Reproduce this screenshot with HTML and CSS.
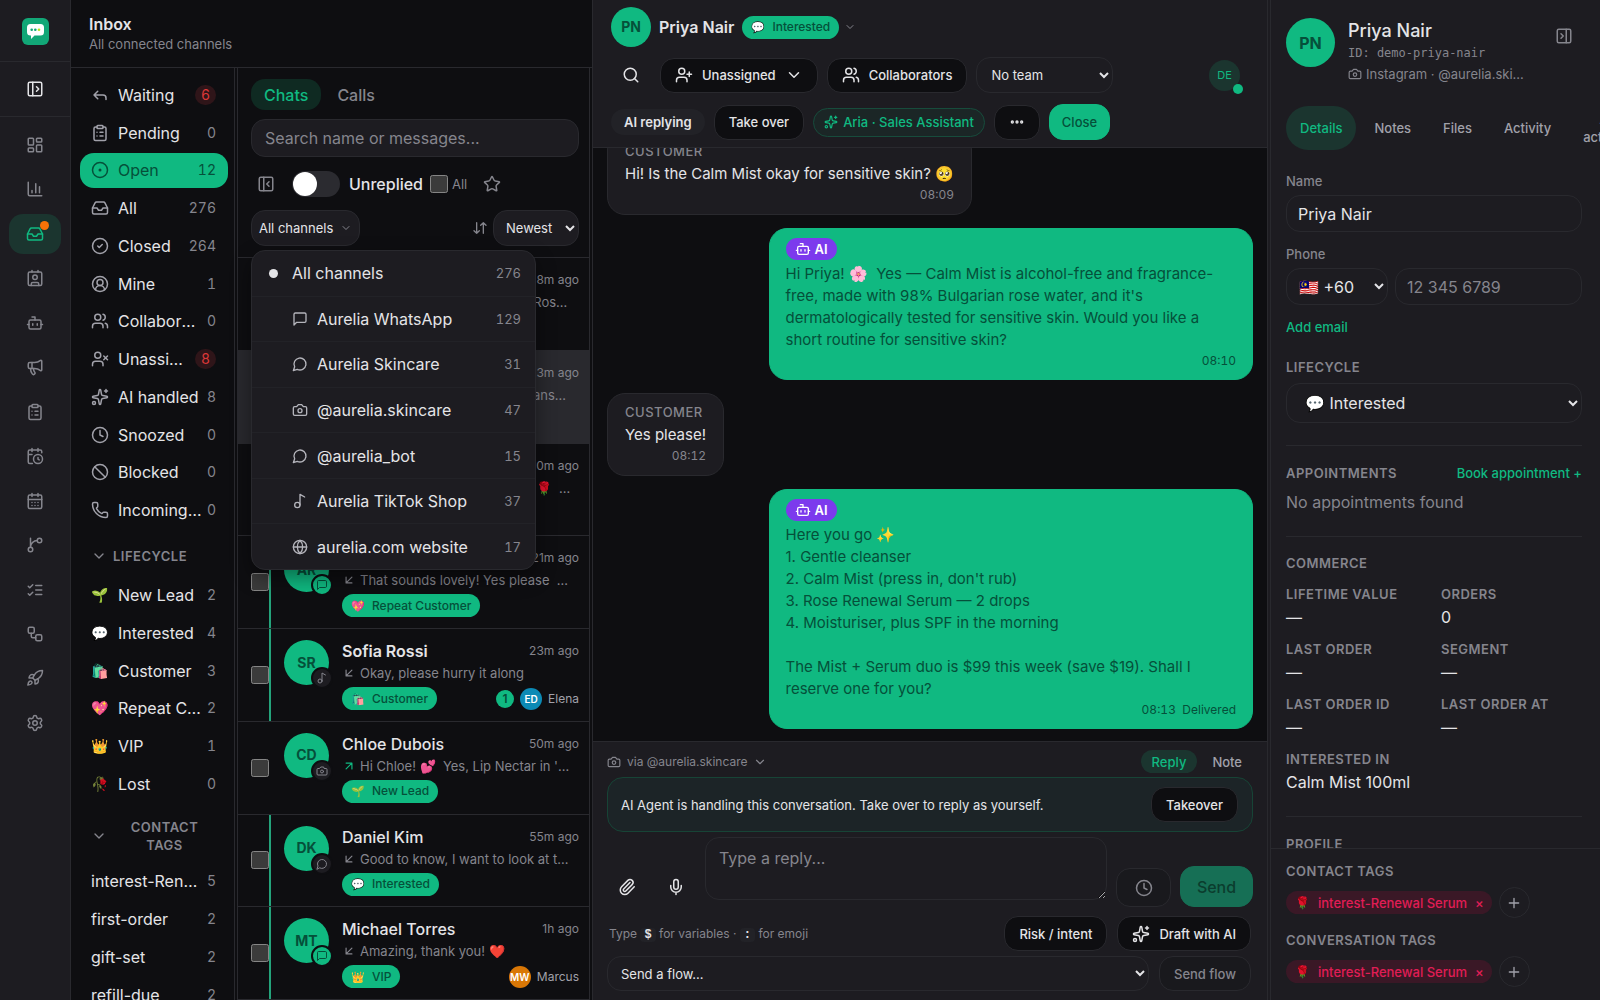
FILE: index.html
```html
<!DOCTYPE html>
<html lang="en">
<head>
    <meta charset="UTF-8">
    <meta name="viewport" content="width=device-width, initial-scale=1.0">
    <title>Inbox</title>
    <link rel="stylesheet" href="styles.css">
</head>
<body>
    <svg class="sprite" aria-hidden="true">
        <symbol id="panel-open" viewBox="0 0 24 24"><rect width="18" height="18" x="3" y="3" rx="2"/><path d="M9 3v18M14 9l3 3-3 3"/></symbol>
        <symbol id="panel-close" viewBox="0 0 24 24"><rect width="18" height="18" x="3" y="3" rx="2"/><path d="M9 3v18M16 15l-3-3 3-3"/></symbol>
        <symbol id="panel-right" viewBox="0 0 24 24"><rect width="18" height="18" x="3" y="3" rx="2"/><path d="M15 3v18M8 9l3 3-3 3"/></symbol>
        <symbol id="dashboard" viewBox="0 0 24 24"><rect width="7" height="9" x="3" y="3" rx="1"/><rect width="7" height="5" x="14" y="3" rx="1"/><rect width="7" height="9" x="14" y="12" rx="1"/><rect width="7" height="5" x="3" y="16" rx="1"/></symbol>
        <symbol id="chart" viewBox="0 0 24 24"><path d="M3 3v16a2 2 0 0 0 2 2h16M18 17V9M13 17V5M8 17v-3"/></symbol>
        <symbol id="inbox" viewBox="0 0 24 24"><path d="M22 12h-6l-2 3h-4l-2-3H2"/><path d="M5.45 5.11 2 12v6a2 2 0 0 0 2 2h16a2 2 0 0 0 2-2v-6l-3.45-6.89A2 2 0 0 0 16.76 4H7.24a2 2 0 0 0-1.79 1.11z"/></symbol>
        <symbol id="contact" viewBox="0 0 24 24"><path d="M16 2v2M8 2v2M7 22v-2a2 2 0 0 1 2-2h6a2 2 0 0 1 2 2v2"/><circle cx="12" cy="11" r="3"/><rect x="3" y="4" width="18" height="18" rx="2"/></symbol>
        <symbol id="bot" viewBox="0 0 24 24"><path d="M12 8V4H8M2 14h2M20 14h2M15 13v2M9 13v2"/><rect width="16" height="12" x="4" y="8" rx="2"/></symbol>
        <symbol id="megaphone" viewBox="0 0 24 24"><path d="M11 6a13 13 0 0 0 8.4-2.8A1 1 0 0 1 21 4v12a1 1 0 0 1-1.6.8A13 13 0 0 0 11 14H5a2 2 0 0 1-2-2V8a2 2 0 0 1 2-2z"/><path d="M6 14a12 12 0 0 0 2.4 7.2 2 2 0 0 0 3.2-2.4A8 8 0 0 1 10 14M8 6v8"/></symbol>
        <symbol id="clipboard" viewBox="0 0 24 24"><rect width="8" height="4" x="8" y="2" rx="1"/><path d="M16 4h2a2 2 0 0 1 2 2v14a2 2 0 0 1-2 2H6a2 2 0 0 1-2-2V6a2 2 0 0 1 2-2h2M12 11h4M12 16h4M8 11h.01M8 16h.01"/></symbol>
        <symbol id="calendar-clock" viewBox="0 0 24 24"><path d="M16 14v2.2l1.6 1M16 2v4M21 7.5V6a2 2 0 0 0-2-2H5a2 2 0 0 0-2 2v14a2 2 0 0 0 2 2h3.5M3 10h5M8 2v4"/><circle cx="16" cy="16" r="6"/></symbol>
        <symbol id="calendar" viewBox="0 0 24 24"><path d="M8 2v4M16 2v4M3 10h18M8 14h.01M12 14h.01M16 14h.01M8 18h.01M12 18h.01M16 18h.01"/><rect width="18" height="18" x="3" y="4" rx="2"/></symbol>
        <symbol id="branch" viewBox="0 0 24 24"><path d="M15 6a9 9 0 0 0-9 9V3"/><circle cx="18" cy="6" r="3"/><circle cx="6" cy="18" r="3"/></symbol>
        <symbol id="checks" viewBox="0 0 24 24"><path d="m3 17 2 2 4-4M3 7l2 2 4-4M13 6h8M13 12h8M13 18h8"/></symbol>
        <symbol id="workflow" viewBox="0 0 24 24"><rect width="8" height="8" x="3" y="3" rx="2"/><path d="M7 11v4a2 2 0 0 0 2 2h4"/><rect width="8" height="8" x="13" y="13" rx="2"/></symbol>
        <symbol id="rocket" viewBox="0 0 24 24"><path d="M4.5 16.5c-1.5 1.26-2 5-2 5s3.74-.5 5-2c.71-.84.7-2.13-.09-2.91a2.18 2.18 0 0 0-2.91-.09zM12 15l-3-3a22 22 0 0 1 2-3.95A12.88 12.88 0 0 1 22 2c0 2.72-.78 7.5-6 11a22.35 22.35 0 0 1-4 2z"/><path d="M9 12H4s.55-3.03 2-4c1.62-1.08 5 0 5 0M12 15v5s3.03-.55 4-2c1.08-1.62 0-5 0-5"/></symbol>
        <symbol id="settings" viewBox="0 0 24 24"><path d="M9.671 4.136a2.34 2.34 0 0 1 4.659 0 2.34 2.34 0 0 0 3.319 1.915 2.34 2.34 0 0 1 2.33 4.033 2.34 2.34 0 0 0 0 3.831 2.34 2.34 0 0 1-2.33 4.033 2.34 2.34 0 0 0-3.319 1.915 2.34 2.34 0 0 1-4.659 0 2.34 2.34 0 0 0-3.32-1.915 2.34 2.34 0 0 1-2.33-4.033 2.34 2.34 0 0 0 0-3.831A2.34 2.34 0 0 1 6.35 6.051a2.34 2.34 0 0 0 3.319-1.915"/><circle cx="12" cy="12" r="3"/></symbol>
        <symbol id="reply" viewBox="0 0 24 24"><path d="M20 18v-2a4 4 0 0 0-4-4H4M9 17l-5-5 5-5"/></symbol>
        <symbol id="circle-dot" viewBox="0 0 24 24"><circle cx="12" cy="12" r="10"/><circle cx="12" cy="12" r="1"/></symbol>
        <symbol id="circle-check" viewBox="0 0 24 24"><circle cx="12" cy="12" r="10"/><path d="m9 12 2 2 4-4"/></symbol>
        <symbol id="circle-user" viewBox="0 0 24 24"><circle cx="12" cy="12" r="10"/><circle cx="12" cy="10" r="4"/><path d="M18 20a6 6 0 0 0-12 0"/></symbol>
        <symbol id="users" viewBox="0 0 24 24"><path d="M16 21v-2a4 4 0 0 0-4-4H6a4 4 0 0 0-4 4v2M16 3.128a4 4 0 0 1 0 7.744M22 21v-2a4 4 0 0 0-3-3.87"/><circle cx="9" cy="7" r="4"/></symbol>
        <symbol id="user-x" viewBox="0 0 24 24"><path d="M16 21v-2a4 4 0 0 0-4-4H6a4 4 0 0 0-4 4v2M17 8l5 5M22 8l-5 5"/><circle cx="9" cy="7" r="4"/></symbol>
        <symbol id="user-plus" viewBox="0 0 24 24"><path d="M16 21v-2a4 4 0 0 0-4-4H6a4 4 0 0 0-4 4v2M19 8v6M22 11h-6"/><circle cx="9" cy="7" r="4"/></symbol>
        <symbol id="sparkles" viewBox="0 0 24 24"><path d="M11.017 2.814a1 1 0 0 1 1.966 0l1.051 5.558a2 2 0 0 0 1.594 1.594l5.558 1.051a1 1 0 0 1 0 1.966l-5.558 1.051a2 2 0 0 0-1.594 1.594l-1.051 5.558a1 1 0 0 1-1.966 0l-1.051-5.558a2 2 0 0 0-1.594-1.594l-5.558-1.051a1 1 0 0 1 0-1.966l5.558-1.051a2 2 0 0 0 1.594-1.594zM20 2v4M22 4h-4"/><circle cx="4" cy="20" r="2"/></symbol>
        <symbol id="clock" viewBox="0 0 24 24"><circle cx="12" cy="12" r="10"/><path d="M12 6v6l4 2"/></symbol>
        <symbol id="ban" viewBox="0 0 24 24"><circle cx="12" cy="12" r="10"/><path d="m4.9 4.9 14.2 14.2"/></symbol>
        <symbol id="phone" viewBox="0 0 24 24"><path d="M13.832 16.568a1 1 0 0 0 1.213-.303l.355-.465A2 2 0 0 1 17 15h3a2 2 0 0 1 2 2v3a2 2 0 0 1-2 2A18 18 0 0 1 2 4a2 2 0 0 1 2-2h3a2 2 0 0 1 2 2v3a2 2 0 0 1-.8 1.6l-.468.351a1 1 0 0 0-.292 1.233 14 14 0 0 0 6.392 6.384"/></symbol>
        <symbol id="star" viewBox="0 0 24 24"><path d="M11.525 2.295a.53.53 0 0 1 .95 0l2.31 4.679a2.123 2.123 0 0 0 1.595 1.16l5.166.756a.53.53 0 0 1 .294.904l-3.736 3.638a2.123 2.123 0 0 0-.611 1.878l.882 5.14a.53.53 0 0 1-.771.56l-4.618-2.428a2.122 2.122 0 0 0-1.973 0L6.396 21.01a.53.53 0 0 1-.77-.56l.881-5.139a2.122 2.122 0 0 0-.611-1.879L2.16 9.795a.53.53 0 0 1 .294-.906l5.165-.755a2.122 2.122 0 0 0 1.597-1.16z"/></symbol>
        <symbol id="sort" viewBox="0 0 24 24"><path d="m3 16 4 4 4-4M7 20V4M21 8l-4-4-4 4M17 4v16"/></symbol>
        <symbol id="chevron" viewBox="0 0 24 24"><path d="m6 9 6 6 6-6"/></symbol>
        <symbol id="msg-square" viewBox="0 0 24 24"><path d="M21 15a2 2 0 0 1-2 2H7l-4 4V5a2 2 0 0 1 2-2h14a2 2 0 0 1 2 2z"/></symbol>
        <symbol id="msg-circle" viewBox="0 0 24 24"><path d="M7.9 20A9 9 0 1 0 4 16.1L2 22z"/></symbol>
        <symbol id="camera" viewBox="0 0 24 24"><path d="M14.5 4h-5L7 7H4a2 2 0 0 0-2 2v9a2 2 0 0 0 2 2h16a2 2 0 0 0 2-2V9a2 2 0 0 0-2-2h-3z"/><circle cx="12" cy="13" r="3"/></symbol>
        <symbol id="music" viewBox="0 0 24 24"><circle cx="8" cy="18" r="4"/><path d="M12 18V2l7 4"/></symbol>
        <symbol id="globe" viewBox="0 0 24 24"><circle cx="12" cy="12" r="10"/><path d="M12 2a14.5 14.5 0 0 0 0 20 14.5 14.5 0 0 0 0-20M2 12h20"/></symbol>
        <symbol id="arrow-in" viewBox="0 0 24 24"><path d="M17 7 7 17M17 17H7V7"/></symbol>
        <symbol id="arrow-out" viewBox="0 0 24 24"><path d="M7 7h10v10M7 17 17 7"/></symbol>
        <symbol id="search" viewBox="0 0 24 24"><path d="m21 21-4.34-4.34"/><circle cx="11" cy="11" r="8"/></symbol>
        <symbol id="clip" viewBox="0 0 24 24"><path d="m16 6-8.414 8.586a2 2 0 0 0 2.829 2.829l8.414-8.586a4 4 0 1 0-5.657-5.657l-8.379 8.551a6 6 0 1 0 8.485 8.485l8.379-8.551"/></symbol>
        <symbol id="mic" viewBox="0 0 24 24"><path d="M12 19v3M19 10v2a7 7 0 0 1-14 0v-2"/><rect x="9" y="2" width="6" height="13" rx="3"/></symbol>
        <symbol id="dots" viewBox="0 0 24 24"><circle cx="5" cy="12" r="1"/><circle cx="12" cy="12" r="1"/><circle cx="19" cy="12" r="1"/></symbol>
        <symbol id="plus" viewBox="0 0 24 24"><path d="M5 12h14M12 5v14"/></symbol>
    </svg>

    <div class="app">
        <aside class="rail">
            <a class="logo" href="#" aria-label="Home">
                <svg viewBox="0 0 27 27" width="27" height="27">
                    <rect width="27" height="27" rx="6" fill="#12a777"/>
                    <path d="M8.500 6h10a3.500 3.500 0 0 1 3.500 3.500v4.500a3.500 3.500 0 0 1-3.500 3.500H12.500L9 21v-3.500h-.5A3.500 3.500 0 0 1 5 14V9.500A3.500 3.500 0 0 1 8.500 6z" fill="#fff"/>
                    <circle cx="9.700" cy="11.800" r="1.300" fill="#12a777"/>
                    <circle cx="13.300" cy="11.800" r="1.300" fill="#12a777"/>
                    <circle cx="17" cy="11.800" r="1.300" fill="#b5e61d"/>
                </svg>
            </a>
            <button class="rail-toggle" aria-label="Expand sidebar"><svg class="icon"><use href="#panel-open"/></svg></button>
            <nav class="rail-nav">
                <a href="#" aria-label="Dashboard"><svg class="icon"><use href="#dashboard"/></svg></a>
                <a href="#" aria-label="Reports"><svg class="icon"><use href="#chart"/></svg></a>
                <a href="#" aria-label="Inbox" class="active"><svg class="icon"><use href="#inbox"/></svg><span class="alert-dot"></span></a>
                <a href="#" aria-label="Contacts"><svg class="icon"><use href="#contact"/></svg></a>
                <a href="#" aria-label="AI agents"><svg class="icon"><use href="#bot"/></svg></a>
                <a href="#" aria-label="Broadcasts"><svg class="icon"><use href="#megaphone"/></svg></a>
                <a href="#" aria-label="Forms"><svg class="icon"><use href="#clipboard"/></svg></a>
                <a href="#" aria-label="Scheduled"><svg class="icon"><use href="#calendar-clock"/></svg></a>
                <a href="#" aria-label="Calendar"><svg class="icon"><use href="#calendar"/></svg></a>
                <a href="#" aria-label="Flows"><svg class="icon"><use href="#branch"/></svg></a>
                <a href="#" aria-label="Tasks"><svg class="icon"><use href="#checks"/></svg></a>
                <a href="#" aria-label="Integrations"><svg class="icon"><use href="#workflow"/></svg></a>
                <a href="#" aria-label="Launch"><svg class="icon"><use href="#rocket"/></svg></a>
                <a href="#" aria-label="Settings"><svg class="icon"><use href="#settings"/></svg></a>
            </nav>
        </aside>

        <section class="inbox">
            <header class="inbox-header">
                <h1>Inbox</h1>
                <p>All connected channels</p>
            </header>
            <div class="inbox-body">
                <nav class="filters">
                    <ul class="filter-list views">
                        <li><a href="#"><svg class="icon"><use href="#reply"/></svg><span class="label">Waiting</span><span class="count hot">6</span></a></li>
                        <li><a href="#"><svg class="icon"><use href="#clipboard"/></svg><span class="label">Pending</span><span class="count">0</span></a></li>
                        <li><a href="#" class="active"><svg class="icon"><use href="#circle-dot"/></svg><span class="label">Open</span><span class="count">12</span></a></li>
                        <li><a href="#"><svg class="icon"><use href="#inbox"/></svg><span class="label">All</span><span class="count">276</span></a></li>
                        <li><a href="#"><svg class="icon"><use href="#circle-check"/></svg><span class="label">Closed</span><span class="count">264</span></a></li>
                        <li><a href="#"><svg class="icon"><use href="#circle-user"/></svg><span class="label">Mine</span><span class="count">1</span></a></li>
                        <li><a href="#"><svg class="icon"><use href="#users"/></svg><span class="label">Collaborating</span><span class="count">0</span></a></li>
                        <li><a href="#"><svg class="icon"><use href="#user-x"/></svg><span class="label">Unassigned</span><span class="count hot">8</span></a></li>
                        <li><a href="#"><svg class="icon"><use href="#sparkles"/></svg><span class="label">AI handled</span><span class="count">8</span></a></li>
                        <li><a href="#"><svg class="icon"><use href="#clock"/></svg><span class="label">Snoozed</span><span class="count">0</span></a></li>
                        <li><a href="#"><svg class="icon"><use href="#ban"/></svg><span class="label">Blocked</span><span class="count">0</span></a></li>
                        <li><a href="#"><svg class="icon"><use href="#phone"/></svg><span class="label">Incoming calls</span><span class="count">0</span></a></li>
                    </ul>
                    <button class="filter-heading"><svg class="icon small"><use href="#chevron"/></svg><span>LIFECYCLE</span></button>
                    <ul class="filter-list stages">
                        <li><a href="#"><span class="emoji">🌱</span><span class="label">New Lead</span><span class="count">2</span></a></li>
                        <li><a href="#"><span class="emoji">💬</span><span class="label">Interested</span><span class="count">4</span></a></li>
                        <li><a href="#"><span class="emoji">🛍️</span><span class="label">Customer</span><span class="count">3</span></a></li>
                        <li><a href="#"><span class="emoji">💖</span><span class="label">Repeat Customer</span><span class="count">2</span></a></li>
                        <li><a href="#"><span class="emoji">👑</span><span class="label">VIP</span><span class="count">1</span></a></li>
                        <li><a href="#"><span class="emoji">🥀</span><span class="label">Lost</span><span class="count">0</span></a></li>
                    </ul>
                    <button class="filter-heading"><svg class="icon small"><use href="#chevron"/></svg><span>CONTACT TAGS</span></button>
                    <ul class="filter-list tags">
                        <li><a href="#"><span class="label">interest-Renewal Serum</span><span class="count">5</span></a></li>
                        <li><a href="#"><span class="label">first-order</span><span class="count">2</span></a></li>
                        <li><a href="#"><span class="label">gift-set</span><span class="count">2</span></a></li>
                        <li><a href="#"><span class="label">refill-due</span><span class="count">2</span></a></li>
                    </ul>
                </nav>
                <div class="resizer"></div>

                <div class="chats">
                    <div class="chat-tools">
                        <div class="tabs">
                            <button class="tab active">Chats</button>
                            <button class="tab">Calls</button>
                        </div>
                        <input class="search-box" type="search" placeholder="Search name or messages..." aria-label="Search name or messages">
                        <div class="toggle-row">
                            <button class="plain" aria-label="Collapse filters"><svg class="icon"><use href="#panel-close"/></svg></button>
                            <label class="switch-label"><input type="checkbox" class="switch">Unreplied</label>
                            <label class="all-label"><input type="checkbox" class="tick">All</label>
                            <button class="plain" aria-label="Starred"><svg class="icon"><use href="#star"/></svg></button>
                        </div>
                        <div class="sort-row">
                            <button class="channel-button">All channels <svg class="icon micro muted"><use href="#chevron"/></svg></button>
                            <svg class="icon small muted"><use href="#sort"/></svg>
                            <select class="sort-select" aria-label="Sort order"><option>Newest</option><option>Oldest</option></select>
                            <ul class="channel-menu">
                                <li><button><span class="bullet"></span><span class="label">All channels</span><span class="count">276</span></button></li>
                                <li><button class="sub"><svg class="icon small"><use href="#msg-square"/></svg><span class="label">Aurelia WhatsApp</span><span class="count">129</span></button></li>
                                <li><button class="sub"><svg class="icon small"><use href="#msg-circle"/></svg><span class="label">Aurelia Skincare</span><span class="count">31</span></button></li>
                                <li><button class="sub"><svg class="icon small"><use href="#camera"/></svg><span class="label">@aurelia.skincare</span><span class="count">47</span></button></li>
                                <li><button class="sub"><svg class="icon small"><use href="#msg-circle"/></svg><span class="label">@aurelia_bot</span><span class="count">15</span></button></li>
                                <li><button class="sub"><svg class="icon small"><use href="#music"/></svg><span class="label">Aurelia TikTok Shop</span><span class="count">37</span></button></li>
                                <li><button class="sub"><svg class="icon small"><use href="#globe"/></svg><span class="label">aurelia.com website</span><span class="count">17</span></button></li>
                            </ul>
                        </div>
                    </div>

                    <ul class="chat-list">
                        <li class="chat">
                            <input type="checkbox" class="tick" aria-label="Select Hana Lee">
                            <a href="#">
                                <span class="avatar">HL</span>
                                <span class="chat-text">
                                    <span class="chat-top"><b>Hana Lee</b><time>8m ago</time></span>
                                    <span class="preview"><svg class="icon tiny"><use href="#arrow-in"/></svg><span>Hello! Could I still order the &nbsp;Rosewater</span></span>
                                </span>
                            </a>
                        </li>
                        <li class="chat selected">
                            <input type="checkbox" class="tick" aria-label="Select Priya Nair">
                            <a href="#">
                                <span class="avatar">PN</span>
                                <span class="chat-text">
                                    <span class="chat-top"><b>Priya Nair</b><time>13m ago</time></span>
                                    <span class="preview"><svg class="icon tiny"><use href="#arrow-out"/></svg><span>Here you go ✨ 1. Gentle cleanser 2. Calm Mist</span></span>
                                </span>
                            </a>
                        </li>
                        <li class="chat">
                            <input type="checkbox" class="tick" aria-label="Select Emma Clarke">
                            <a href="#">
                                <span class="avatar">EC</span>
                                <span class="chat-text">
                                    <span class="chat-top"><b>Emma Clarke</b><time>20m ago</time></span>
                                    <span class="preview"><svg class="icon tiny"><use href="#arrow-out"/></svg><span>So happy to hear it, Emma!! &nbsp;🌹 &nbsp;Wonderful</span></span>
                                </span>
                            </a>
                        </li>
                        <li class="chat unread">
                            <input type="checkbox" class="tick" aria-label="Select Aisha Rahman">
                            <a href="#">
                                <span class="avatar">AR<i class="via own"><svg class="icon micro"><use href="#msg-square"/></svg></i></span>
                                <span class="chat-text">
                                    <span class="chat-top"><b>Aisha Rahman</b><time>21m ago</time></span>
                                    <span class="preview"><svg class="icon tiny"><use href="#arrow-in"/></svg><span>That sounds lovely! Yes please &nbsp;add it</span></span>
                                    <span class="chat-meta"><span class="stage"><span class="emoji">💖</span>Repeat Customer</span></span>
                                </span>
                            </a>
                        </li>
                        <li class="chat unread">
                            <input type="checkbox" class="tick" aria-label="Select Sofia Rossi">
                            <a href="#">
                                <span class="avatar">SR<i class="via"><svg class="icon micro"><use href="#music"/></svg></i></span>
                                <span class="chat-text">
                                    <span class="chat-top"><b class="new">Sofia Rossi</b><time>23m ago</time></span>
                                    <span class="preview"><svg class="icon tiny"><use href="#arrow-in"/></svg><span>Okay, please hurry it along</span></span>
                                    <span class="chat-meta"><span class="stage"><span class="emoji">🛍️</span>Customer</span><span class="unread-count">1</span><span class="agent blue">ED</span><span class="agent-name">Elena</span></span>
                                </span>
                            </a>
                        </li>
                        <li class="chat">
                            <input type="checkbox" class="tick" aria-label="Select Chloe Dubois">
                            <a href="#">
                                <span class="avatar">CD<i class="via"><svg class="icon micro"><use href="#camera"/></svg></i></span>
                                <span class="chat-text">
                                    <span class="chat-top"><b>Chloe Dubois</b><time>50m ago</time></span>
                                    <span class="preview"><svg class="icon tiny out"><use href="#arrow-out"/></svg><span>Hi Chloe! 💕 &nbsp;Yes, Lip Nectar in 'Rose'</span></span>
                                    <span class="chat-meta"><span class="stage"><span class="emoji">🌱</span>New Lead</span></span>
                                </span>
                            </a>
                        </li>
                        <li class="chat unread">
                            <input type="checkbox" class="tick" aria-label="Select Daniel Kim">
                            <a href="#">
                                <span class="avatar">DK<i class="via"><svg class="icon micro"><use href="#msg-circle"/></svg></i></span>
                                <span class="chat-text">
                                    <span class="chat-top"><b>Daniel Kim</b><time>55m ago</time></span>
                                    <span class="preview"><svg class="icon tiny"><use href="#arrow-in"/></svg><span>Good to know, I want to look at the serum</span></span>
                                    <span class="chat-meta"><span class="stage"><span class="emoji">💬</span>Interested</span></span>
                                </span>
                            </a>
                        </li>
                        <li class="chat unread">
                            <input type="checkbox" class="tick" aria-label="Select Michael Torres">
                            <a href="#">
                                <span class="avatar">MT<i class="via own"><svg class="icon micro"><use href="#msg-square"/></svg></i></span>
                                <span class="chat-text">
                                    <span class="chat-top"><b>Michael Torres</b><time>1h ago</time></span>
                                    <span class="preview"><svg class="icon tiny"><use href="#arrow-in"/></svg><span>Amazing, thank you! ❤️</span></span>
                                    <span class="chat-meta"><span class="stage"><span class="emoji">👑</span>VIP</span><span class="agent orange">MW</span><span class="agent-name">Marcus</span></span>
                                </span>
                            </a>
                        </li>
                    </ul>
                </div>
                <div class="resizer"></div>
            </div>
        </section>

        <main class="conversation">
            <header class="conv-header">
                <div class="conv-title">
                    <span class="avatar">PN</span>
                    <h2>Priya Nair</h2>
                    <span class="stage"><span class="emoji">💬</span>Interested</span>
                    <button class="plain" aria-label="Change stage"><svg class="icon micro"><use href="#chevron"/></svg></button>
                </div>
                <div class="conv-actions">
                    <button class="icon-button" aria-label="Search conversation"><svg class="icon"><use href="#search"/></svg></button>
                    <button class="btn"><svg class="icon"><use href="#user-plus"/></svg>Unassigned<svg class="icon"><use href="#chevron"/></svg></button>
                    <button class="btn"><svg class="icon"><use href="#users"/></svg>Collaborators</button>
                    <select class="team-select" aria-label="Team"><option>No team</option></select>
                    <span class="viewer">DE<i></i></span>
                </div>
                <div class="conv-status">
                    <span class="ai-state">AI replying</span>
                    <button class="btn">Take over</button>
                    <button class="agent-pill"><svg class="icon tiny"><use href="#sparkles"/></svg>Aria · Sales Assistant</button>
                    <button class="btn" aria-label="More"><svg class="icon small bold"><use href="#dots"/></svg></button>
                    <button class="btn primary">Close</button>
                </div>
            </header>

            <div class="messages">
                <article class="bubble">
                    <span class="sender">CUSTOMER</span>
                    <p>Hi! Is the Calm Mist okay for sensitive skin? 🥺</p>
                    <time>08:09</time>
                </article>
                <article class="bubble mine">
                    <span class="ai-badge"><svg class="icon small"><use href="#bot"/></svg>AI</span>
                    <p>Hi Priya! 🌸 &nbsp;Yes — Calm Mist is alcohol-free and fragrance-free, made with 98% Bulgarian rose water, and it's dermatologically tested for sensitive skin. Would you like a short routine for sensitive skin?</p>
                    <time>08:10</time>
                </article>
                <article class="bubble">
                    <span class="sender">CUSTOMER</span>
                    <p>Yes please!</p>
                    <time>08:12</time>
                </article>
                <article class="bubble mine">
                    <span class="ai-badge"><svg class="icon small"><use href="#bot"/></svg>AI</span>
                    <p>Here you go ✨<br>1. Gentle cleanser<br>2. Calm Mist (press in, don't rub)<br>3. Rose Renewal Serum — 2 drops<br>4. Moisturiser, plus SPF in the morning<br><br>The Mist + Serum duo is $99 this week (save $19). Shall I reserve one for you?</p>
                    <time>08:13 &nbsp;Delivered</time>
                </article>
            </div>

            <footer class="composer">
                <div class="via-row">
                    <button class="via-button"><svg class="icon tiny"><use href="#camera"/></svg>via @aurelia.skincare<svg class="icon tiny"><use href="#chevron"/></svg></button>
                    <button class="mode active">Reply</button>
                    <button class="mode">Note</button>
                </div>
                <div class="ai-banner">
                    <p>AI Agent is handling this conversation. Take over to reply as yourself.</p>
                    <button class="btn">Takeover</button>
                </div>
                <div class="reply-row">
                    <button class="icon-button" aria-label="Attach file"><svg class="icon"><use href="#clip"/></svg></button>
                    <button class="icon-button" aria-label="Record audio"><svg class="icon"><use href="#mic"/></svg></button>
                    <textarea placeholder="Type a reply..." aria-label="Reply"></textarea>
                    <button class="btn later" aria-label="Send later" disabled><svg class="icon"><use href="#clock"/></svg></button>
                    <button class="btn primary send" disabled>Send</button>
                </div>
                <div class="hint-row">
                    <p>Type <kbd>$</kbd> for variables · <kbd>:</kbd> for emoji</p>
                    <button class="btn">Risk / intent</button>
                    <button class="btn"><svg class="icon"><use href="#sparkles"/></svg>Draft with AI</button>
                </div>
                <div class="flow-row">
                    <select aria-label="Flow"><option>Send a flow...</option></select>
                    <button class="btn" disabled>Send flow</button>
                </div>
            </footer>
        </main>

        <aside class="details">
            <div class="resizer"></div>
            <div class="details-body">
                <header class="profile">
                    <span class="avatar">PN</span>
                    <div class="profile-text">
                        <h2>Priya Nair</h2>
                        <code>ID: demo-priya-nair</code>
                        <p><svg class="icon tiny"><use href="#camera"/></svg>Instagram · @aurelia.ski...</p>
                    </div>
                    <button class="plain" aria-label="Collapse details"><svg class="icon"><use href="#panel-right"/></svg></button>
                </header>
                <div class="detail-tabs">
                    <button class="active">Details</button>
                    <button>Notes</button>
                    <button>Files</button>
                    <button>Activity</button>
                    <button>AI<br>activity</button>
                </div>
                <div class="detail-scroll">
                    <div class="field">
                        <label for="name">Name</label>
                        <input id="name" type="text" value="Priya Nair">
                    </div>
                    <div class="field">
                        <label for="phone">Phone</label>
                        <div class="phone-row">
                            <select aria-label="Country code"><option>🇲🇾 +60</option></select>
                            <input id="phone" type="tel" placeholder="12 345 6789">
                        </div>
                    </div>
                    <a class="link add-email" href="#">Add email</a>
                    <div class="field stage-field">
                        <label class="caps" for="stage">LIFECYCLE</label>
                        <select id="stage"><option>💬 Interested</option></select>
                    </div>
                    <section class="block">
                        <div class="block-head"><h3 class="caps">APPOINTMENTS</h3><a class="link" href="#">Book appointment +</a></div>
                        <p class="empty">No appointments found</p>
                    </section>
                    <section class="block commerce">
                        <h3 class="caps">COMMERCE</h3>
                        <dl>
                            <div><dt class="caps">LIFETIME VALUE</dt><dd>—</dd></div>
                            <div><dt class="caps">ORDERS</dt><dd>0</dd></div>
                            <div><dt class="caps">LAST ORDER</dt><dd>—</dd></div>
                            <div><dt class="caps">SEGMENT</dt><dd>—</dd></div>
                            <div><dt class="caps">LAST ORDER ID</dt><dd>—</dd></div>
                            <div><dt class="caps">LAST ORDER AT</dt><dd>—</dd></div>
                            <div><dt class="caps">INTERESTED IN</dt><dd>Calm Mist 100ml</dd></div>
                        </dl>
                    </section>
                    <section class="block">
                        <h3 class="caps">PROFILE</h3>
                    </section>
                </div>
                <footer class="tag-footer">
                    <h3 class="caps">CONTACT TAGS</h3>
                    <div class="tag-row">
                        <span class="tag"><span class="emoji">🌹</span>interest-Renewal Serum<button aria-label="Remove tag">×</button></span>
                        <button class="add" aria-label="Add contact tag"><svg class="icon small"><use href="#plus"/></svg></button>
                    </div>
                    <h3 class="caps">CONVERSATION TAGS</h3>
                    <div class="tag-row">
                        <span class="tag"><span class="emoji">🌹</span>interest-Renewal Serum<button aria-label="Remove tag">×</button></span>
                        <button class="add" aria-label="Add conversation tag"><svg class="icon small"><use href="#plus"/></svg></button>
                    </div>
                </footer>
            </div>
        </aside>
    </div>
</body>
</html>
```
FILE: styles.css
```css
:root {
    color-scheme: dark;
    --bg: #0e0e11;
    --panel: #1d1c21;
    --line: #29292e;
    --text: #e4e4e7;
    --muted: #85858d;
    --green: #10b981;
    --ink: #05503a;
    --green-soft: #1b352f;
}

* { box-sizing: border-box; }
body { margin: 0; height: 100vh; overflow: hidden; background: var(--bg); color: var(--text); font: 15px/22px Inter, sans-serif; }
h1, h2, h3, p, ul, dl, dd { margin: 0; padding: 0; }
ul { list-style: none; }
a { color: inherit; text-decoration: none; }
button, input, select, textarea { font: inherit; color: inherit; }
button { background: none; border: none; padding: 0; cursor: pointer; }

.sprite { display: none; }
.icon { width: 18px; height: 18px; flex: none; fill: none; stroke: currentColor; stroke-width: 2; stroke-linecap: round; stroke-linejoin: round; }
.icon.small { width: 16px; height: 16px; }
.icon.tiny { width: 14px; height: 14px; }
.icon.micro { width: 12px; height: 12px; }
.icon.bold { stroke-width: 3; }
.muted { color: var(--muted); }
.label { flex: 1; min-width: 0; overflow: hidden; white-space: nowrap; text-overflow: ellipsis; }
.caps { font-size: 13px; line-height: 18px; font-weight: 600; color: var(--muted); letter-spacing: 0.5px; }
.plain { display: flex; color: var(--muted); }
.link { color: var(--green); font-size: 13px; line-height: 18px; font-weight: 500; }
.resizer { width: 4px; flex: none; border: solid var(--line); border-width: 0 1px; }

.app { display: flex; height: 100vh; }

/* icon rail */
.rail { width: 71px; flex: none; background: var(--panel); border-right: 1px solid var(--line); }
.logo { display: flex; justify-content: center; height: 62px; padding-top: 18px; border-bottom: 1px solid var(--line); }
.rail-toggle { display: flex; align-items: center; justify-content: center; width: 100%; height: 55px; border-bottom: 1px solid var(--line); }
.rail-nav { display: flex; flex-direction: column; justify-content: space-between; height: 618px; margin: 8px 9px 0; }
.rail-nav a { position: relative; display: flex; align-items: center; justify-content: center; height: 40px; border-radius: 14px; color: var(--muted); }
.rail-nav a.active { background: var(--green-soft); color: var(--green); }
.alert-dot { position: absolute; top: 7px; right: 12px; width: 9px; height: 9px; border-radius: 50%; background: #f97307; }

/* inbox */
.inbox { width: 522px; flex: none; display: flex; flex-direction: column; }
.inbox-header { height: 68px; padding: 13px 18px 0; border-bottom: 1px solid var(--line); border-right: 1px solid var(--line); }
.inbox-header h1 { font-size: 16px; line-height: 22px; font-weight: 600; }
.inbox-header p { font-size: 13px; line-height: 18px; color: var(--muted); }
.inbox-body { display: flex; flex: 1; min-height: 0; }

.filters { width: 163px; flex: none; padding: 9px 6px 0 9px; overflow: hidden; }
.filter-list { display: flex; flex-direction: column; gap: 2px; font-size: 16px; }
.filter-list.views { height: 451px; }
.filter-list.stages { height: 225px; }
.filter-list li { flex: 1; display: flex; }
.filter-list a { flex: 1; min-width: 0; display: flex; align-items: center; gap: 4px; padding: 0 12px 0 11px; border-radius: 14px; }
.filter-list .icon, .filter-list .emoji { margin-right: 5px; }
.filter-list .icon { color: #a1a1aa; }
.filter-list .active { background: var(--green); }
.filter-list .active, .filter-list .active .icon, .filter-list .active .count { color: var(--ink); }
.filter-list .emoji { width: 18px; font-size: 14px; }
.filter-list.tags li { flex: 0 0 36px; }
.count { font-size: 14px; color: var(--muted); font-variant-numeric: tabular-nums; }
.count.hot { padding: 0 6px; line-height: 20px; border-radius: 10px; background: #2f1519; color: #dc3838; }
.filter-heading { display: flex; align-items: center; gap: 6px; min-height: 24px; margin: 16px 0 9px; padding: 0 12px 0 11px; font-size: 13px; line-height: 18px; font-weight: 600; color: var(--muted); letter-spacing: 0.5px; }

/* chat list */
.chats { flex: 1; min-width: 0; display: flex; flex-direction: column; }
.chat-tools { display: flex; flex-direction: column; padding: 11px 10px 11px 13px; border-bottom: 1px solid var(--line); }
.tabs { display: flex; gap: 3px; margin-bottom: 9px; }
.tab { height: 31px; padding: 0 13px; border-radius: 14px; color: var(--muted); font-size: 16px; font-weight: 500; }
.tab.active { background: #0f2a22; color: var(--green); }
.search-box { height: 38px; padding: 0 13px; border: 1px solid var(--line); border-radius: 14px; background: var(--panel); font-size: 16px; }
::placeholder { color: var(--muted); opacity: 1; }
.toggle-row { display: flex; align-items: center; height: 53px; padding-left: 6px; }
.switch-label { display: flex; align-items: center; gap: 9px; margin-left: 17px; font-size: 16px; font-weight: 500; }
.switch { appearance: none; width: 48px; height: 26px; margin: 0; border-radius: 13px; background: #2b2b30; display: flex; align-items: center; }
.switch::before { content: ""; width: 24px; height: 24px; margin-left: 1px; border-radius: 50%; background: #fff; }
.tick { width: 18px; height: 18px; flex: none; margin: 0; }
.all-label { display: flex; align-items: center; gap: 4px; margin: 0 16px 0 7px; font-size: 13px; color: var(--muted); }
.sort-row { position: relative; display: flex; align-items: center; gap: 5px; }
.channel-button { display: flex; align-items: center; gap: 7px; height: 36px; padding: 0 7px; margin-right: auto; border: 1px solid var(--line); border-radius: 14px; background: var(--panel); font-size: 13px; }
.sort-select { height: 36px; width: 86px; padding-left: 8px; border: 1px solid var(--line); border-radius: 14px; background: var(--panel); font-size: 13px; }
.channel-menu { position: absolute; z-index: 2; top: 40px; left: 0; display: flex; flex-direction: column; width: 285px; height: 320px; border: 1px solid var(--line); border-radius: 14px; background: var(--panel); box-shadow: 0 8px 20px rgba(0, 0, 0, 0.4); overflow: hidden; }
.channel-menu li { flex: 1; display: flex; }
.channel-menu li + li { border-top: 1px solid #222227; }
.channel-menu button { display: flex; align-items: center; width: 100%; padding: 0 14px 0 17px; text-align: left; font-size: 16px; }
.channel-menu .sub { padding-left: 40px; gap: 9px; }
.channel-menu .count { font-size: 13px; }
.channel-menu .icon { color: #b4b4bb; }
.bullet { width: 9px; height: 9px; margin-right: 14px; border-radius: 50%; background: var(--text); }

.chat-list { flex: 1; min-height: 0; display: flex; flex-direction: column; }
.chat { flex: 1; min-height: 0; display: flex; align-items: center; padding-left: 13px; border-bottom: 1px solid var(--line); }
.chat.selected { background: #29292e; }
.chat a { flex: 1; min-width: 0; height: 100%; display: flex; gap: 13px; padding: 11px 10px 0 13px; border-left: 2px solid transparent; }
.chat.unread a { border-left-color: #24a37b; }
.avatar { position: relative; flex: none; display: flex; align-items: center; justify-content: center; width: 45px; height: 45px; border-radius: 50%; background: var(--green); color: var(--ink); font-size: 14px; font-weight: 700; }
.via { position: absolute; right: -4px; bottom: -4px; display: flex; align-items: center; justify-content: center; width: 22px; height: 22px; border: 2px solid var(--bg); border-radius: 50%; background: var(--panel); color: var(--muted); }
.via.own { background: var(--green); color: var(--ink); }
.chat-text { flex: 1; min-width: 0; display: flex; flex-direction: column; }
.chat-top { display: flex; justify-content: space-between; }
.chat-top b { font-size: 16px; font-weight: 500; }
.chat-top b.new { font-weight: 600; }
.chat-top time { font-size: 12px; color: var(--muted); }
.preview { display: flex; align-items: center; gap: 4px; color: var(--muted); font-size: 13px; }
.preview span { overflow: hidden; white-space: nowrap; text-overflow: ellipsis; margin-right: 8px; }
.preview .out { color: var(--green); }
.chat-meta { display: flex; align-items: center; margin-top: 3px; gap: 6px; }
.stage { display: flex; align-items: center; gap: 7px; height: 23px; padding: 0 9px; border-radius: 12px; background: var(--green); color: var(--ink); font-size: 12px; font-weight: 500; }
.chat-meta .stage { margin-right: auto; }
.stage .emoji { font-size: 11px; }
.unread-count { width: 18px; height: 18px; border-radius: 50%; background: var(--green); color: var(--ink); font-size: 12px; line-height: 18px; font-weight: 600; text-align: center; }
.agent { width: 22px; height: 22px; border-radius: 50%; font-size: 10px; font-weight: 600; color: #fff; text-align: center; }
.agent.blue { background: #0c8ab5; }
.agent.orange { background: #d97706; }
.agent-name { font-size: 12px; color: #a1a1aa; }

/* conversation */
.conversation { flex: 1; min-width: 0; display: flex; flex-direction: column; }
.conv-header { flex: none; background: var(--panel); border-bottom: 1px solid var(--line); padding: 7px 27px 7px 18px; }
.conv-title { display: flex; align-items: center; gap: 8px; }
.conv-title .avatar { width: 40px; height: 40px; }
.conv-title h2 { font-size: 16px; font-weight: 600; }
.conv-title .plain { margin-left: -3px; }
.conv-actions { display: flex; align-items: center; gap: 9px; margin-top: 10px; }
.conv-status { display: flex; align-items: center; gap: 9px; margin-top: 11px; }
.icon-button { display: flex; align-items: center; justify-content: center; width: 40px; height: 36px; }
.btn { display: flex; align-items: center; justify-content: center; gap: 9px; height: 35px; padding: 0 14px; border: 1px solid var(--line); border-radius: 14px; background: var(--bg); font-size: 13px; font-weight: 500; white-space: nowrap; }
.btn.primary { height: 36px; padding: 0 12px; background: var(--green); border-color: var(--green); color: var(--ink); }
.btn:disabled { background: #19191d; color: var(--muted); cursor: default; }
.team-select { width: 137px; height: 36px; padding-left: 10px; border: 1px solid var(--line); border-radius: 14px; background: var(--panel); font-size: 13px; }
.viewer { position: relative; width: 31px; height: 31px; margin-left: auto; border-radius: 50%; background: var(--green-soft); color: var(--green); font-size: 11px; line-height: 31px; text-align: center; }
.viewer i { position: absolute; right: -3px; bottom: -3px; width: 10px; height: 10px; border-radius: 50%; background: var(--green); }
.ai-state { padding: 2px 13px; border-radius: 13px; background: #222227; font-size: 13px; font-weight: 600; }
.agent-pill { display: flex; align-items: center; gap: 5px; height: 29px; padding: 0 10px; border: 1px solid #174c3c; border-radius: 15px; background: #1b2626; color: var(--green); font-size: 13px; font-weight: 500; }

.messages { flex: 1; min-height: 0; display: flex; flex-direction: column; justify-content: flex-end; align-items: flex-start; gap: 13px; padding: 0 14px 12px; overflow: hidden; }
.bubble { flex: none; max-width: 75%; display: flex; flex-direction: column; align-items: flex-start; padding: 9px 17px; border: 1px solid var(--line); border-radius: 18px; background: var(--panel); }
.bubble p { font-size: 15px; line-height: 22px; }
.bubble time { align-self: flex-end; font-size: 12px; line-height: 20px; color: var(--muted); font-variant-numeric: tabular-nums; }
.bubble.mine { align-self: flex-end; padding: 9px 16px 8px; background: var(--green); border-color: var(--green); color: var(--ink); }
.bubble.mine time { color: var(--ink); }
.sender { margin-bottom: 3px; font-size: 13px; line-height: 18px; color: var(--muted); font-weight: 500; letter-spacing: 0.5px; }
.ai-badge { display: flex; align-items: center; gap: 4px; height: 22px; margin-bottom: 3px; padding: 0 9px; border-radius: 11px; background: #7c3aed; color: #fff; font-size: 13px; font-weight: 600; }

.composer { flex: none; padding: 8px 14px 9px; background: var(--panel); border-top: 1px solid var(--line); }
.via-row { display: flex; align-items: center; }
.via-button { display: flex; align-items: center; gap: 6px; margin-right: auto; color: var(--muted); font-size: 12px; }
.mode { height: 23px; padding: 0 11px; margin-left: 4px; border-radius: 12px; color: #a1a1aa; font-size: 13px; font-weight: 500; }
.mode.active { background: var(--green-soft); color: var(--green); }
.ai-banner { display: flex; align-items: center; justify-content: space-between; height: 55px; margin-top: 4px; padding: 0 14px 0 13px; border: 1px solid #174436; border-radius: 16px; background: #1c2427; }
.ai-banner p { font-size: 13px; }
.reply-row { display: flex; align-items: flex-end; gap: 9px; margin-top: 5px; }
.reply-row .icon-button { height: 40px; }
textarea { flex: 1; min-width: 0; height: 63px; margin-bottom: 7px; padding: 9px 13px; border: 1px solid var(--line); border-radius: 14px; background: var(--panel); font-size: 16px; }
.btn.later { width: 55px; height: 39px; }
.btn.send { width: 73px; height: 41px; background: #166f55; border-color: #166f55; color: #0b3d2e; font-size: 16px; }
.hint-row { display: flex; align-items: center; gap: 10px; margin: 9px 2px 0; }
.hint-row p { margin-right: auto; color: var(--muted); font-size: 12px; }
kbd { padding: 0 4px; font: 600 12px "Liberation Mono", monospace; color: var(--text); background: #222227; border-radius: 4px; }
.flow-row { display: flex; gap: 10px; margin: 5px 2px 0 0; }
.flow-row select { flex: 1; min-width: 0; height: 35px; padding-left: 9px; border: 1px solid var(--line); border-radius: 14px; background: var(--panel); font-size: 13px; }

/* contact details */
.details { width: 333px; flex: none; display: flex; background: var(--panel); }
.details-body { flex: 1; min-width: 0; display: flex; flex-direction: column; }
.profile { display: flex; gap: 13px; padding: 18px 27px 0 15px; }
.profile .avatar { width: 49px; height: 49px; font-size: 16px; }
.profile-text { flex: 1; min-width: 0; display: flex; flex-direction: column; }
.profile h2 { font-size: 18px; line-height: 26px; font-weight: 500; }
.profile code { font: 12px/18px "DejaVu Sans Mono", monospace; color: var(--muted); }
.profile p { display: flex; align-items: center; gap: 4px; margin-top: 1px; font-size: 13px; color: var(--muted); }
.profile .plain { align-self: flex-start; margin-top: 9px; }
.detail-tabs { display: flex; gap: 4px; margin: 21px 0 0 15px; overflow: hidden; }
.detail-tabs button { flex: none; height: 44px; padding: 0 14px; border-radius: 22px; color: #a1a1aa; font-size: 13px; line-height: 18px; font-weight: 500; }
.detail-tabs button.active { background: var(--green-soft); color: var(--green); }
.detail-scroll { flex: 1; min-height: 0; padding: 22px 18px 0 15px; overflow: hidden; }
.field { display: flex; flex-direction: column; margin-bottom: 13px; }
.field label { margin-bottom: 5px; font-size: 13px; line-height: 18px; font-weight: 500; color: var(--muted); }
.field input, .field select { min-width: 0; height: 37px; padding: 0 11px; border: 1px solid var(--line); border-radius: 14px; background: var(--panel); font-size: 16px; }
.field select { padding: 0 0 0 8px; }
.field .caps { font-weight: 600; }
.phone-row { display: flex; gap: 7px; }
.phone-row select { width: 102px; flex: none; }
.phone-row input { flex: 1; }
.add-email { display: block; }
.stage-field { margin: 22px 0 22px; }
.stage-field label { margin-bottom: 7px; }
.stage-field select { height: 40px; padding-left: 14px; }
.block { padding: 18px 0 23px; border-top: 1px solid var(--line); }
.block-head { display: flex; justify-content: space-between; margin-bottom: 9px; }
.empty { font-size: 16px; color: var(--muted); }
.commerce { padding-top: 17px; }
.commerce dl { display: grid; grid-template-columns: 1fr 1fr; gap: 12px 14px; margin-top: 13px; }
.commerce dd { margin-top: 3px; font-size: 16px; }
.tag-footer { flex: none; padding: 13px 15px 13px; border-top: 1px solid var(--line); }
.tag-row { display: flex; align-items: center; gap: 7px; margin-top: 7px; }
.tag-row + .caps { margin-top: 13px; }
.tag { display: flex; align-items: center; gap: 8px; height: 23px; padding: 0 8px 0 9px; border-radius: 12px; background: #3a1826; color: #e11d55; font-size: 13px; font-weight: 500; }
.tag .emoji { font-size: 12px; }
.add { display: flex; align-items: center; justify-content: center; width: 31px; height: 31px; border: 1px solid var(--line); border-radius: 50%; color: #a1a1aa; }
```
